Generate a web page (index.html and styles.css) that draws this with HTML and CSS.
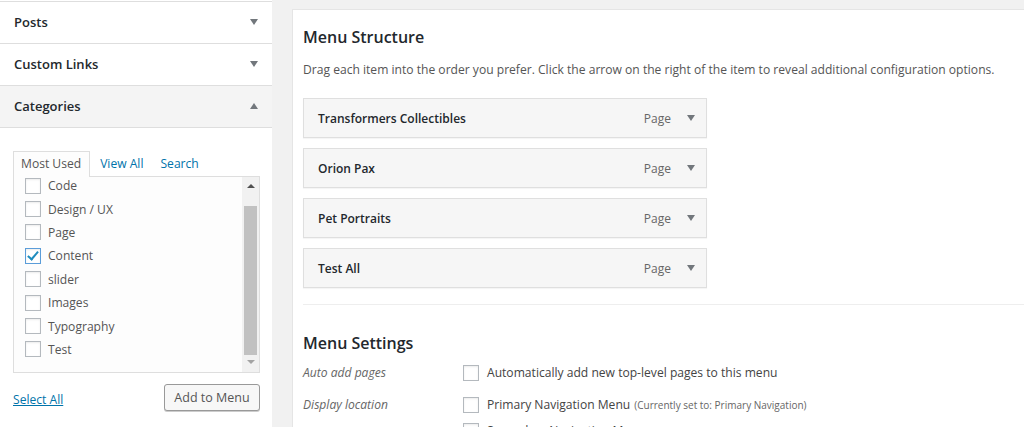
FILE: index.html
```html
<!DOCTYPE html>
<html>

<head>
    <title>Menus</title>
    <meta charset="UTF-8">
    <link rel="stylesheet" href="styles.css">
</head>

<body>
    <div class="page">
        <div class="sidebar">
            <div class="section">
                <div class="section-head">
                    <span>Posts</span>
                    <span class="caret down"></span>
                </div>
            </div>
            <div class="section">
                <div class="section-head">
                    <span>Custom Links</span>
                    <span class="caret down"></span>
                </div>
            </div>
            <div class="section open">
                <div class="section-head">
                    <span>Categories</span>
                    <span class="caret up"></span>
                </div>
                <div class="section-body">
                    <div class="tabs">
                        <span class="tab active">Most Used</span>
                        <a class="tab">View All</a>
                        <a class="tab">Search</a>
                    </div>
                    <div class="checklist">
                        <ul>
                            <li><span class="box"></span>Code</li>
                            <li><span class="box"></span>Design / UX</li>
                            <li><span class="box"></span>Page</li>
                            <li><span class="box checked"></span>Content</li>
                            <li><span class="box"></span>slider</li>
                            <li><span class="box"></span>Images</li>
                            <li><span class="box"></span>Typography</li>
                            <li><span class="box"></span>Test</li>
                        </ul>
                        <div class="scrollbar">
                            <span class="sb-arrow up"></span>
                            <span class="sb-thumb"></span>
                            <span class="sb-arrow down"></span>
                        </div>
                    </div>
                    <div class="actions">
                        <a class="select-all">Select All</a>
                        <button>Add to Menu</button>
                    </div>
                </div>
            </div>
        </div>

        <div class="main">
            <h2>Menu Structure</h2>
            <p class="desc">Drag each item into the order you prefer. Click the arrow on the right of the item to reveal additional configuration options.</p>

            <div class="menu-items">
                <div class="menu-item">
                    <span class="item-title">Transformers Collectibles</span>
                    <span class="item-type">Page</span>
                    <span class="caret down"></span>
                </div>
                <div class="menu-item">
                    <span class="item-title">Orion Pax</span>
                    <span class="item-type">Page</span>
                    <span class="caret down"></span>
                </div>
                <div class="menu-item">
                    <span class="item-title">Pet Portraits</span>
                    <span class="item-type">Page</span>
                    <span class="caret down"></span>
                </div>
                <div class="menu-item">
                    <span class="item-title">Test All</span>
                    <span class="item-type">Page</span>
                    <span class="caret down"></span>
                </div>
            </div>

            <div class="settings">
                <h3>Menu Settings</h3>
                <div class="setting-row">
                    <span class="setting-label">Auto add pages</span>
                    <div class="setting-options">
                        <label><span class="box"></span>Automatically add new top-level pages to this menu</label>
                    </div>
                </div>
                <div class="setting-row">
                    <span class="setting-label">Display location</span>
                    <div class="setting-options">
                        <label><span class="box"></span>Primary Navigation Menu <small>(Currently set to: Primary Navigation)</small></label>
                        <label><span class="box"></span>Secondary Navigation Menu</label>
                    </div>
                </div>
            </div>
        </div>
    </div>
</body>

</html>
```

FILE: styles.css
```css
body {
    margin: 0;
    background: #f1f1f1;
    font-family: "Open Sans", "Noto Sans", sans-serif;
    font-size: 12.1px;
    color: #444;
    overflow: hidden;
}
.page {
    display: flex;
    gap: 20px;
    height: 427px;
}

/* left accordion */
.sidebar {
    width: 272px;
    flex: none;
    background: white;
    padding-top: 1px;
}
.section {
    border-top: 1px solid #dedede;
}
.section-head {
    height: 41px;
    display: flex;
    align-items: center;
    justify-content: space-between;
    padding: 0 14px 1px;
    box-sizing: border-box;
    font-size: 13px;
    font-weight: 600;
    color: #23282d;
}
.section.open .section-head {
    background: #f4f4f4;
    border-bottom: 1px solid #dedede;
    height: 42px;
}
.caret {
    width: 0;
    height: 0;
    border-left: 4.5px solid transparent;
    border-right: 4.5px solid transparent;
}
.caret.down {
    border-top: 6px solid #72777c;
}
.caret.up {
    border-bottom: 6px solid #72777c;
}
.section-body {
    padding: 23px 12px 0 13px;
}
.tabs {
    display: flex;
    align-items: flex-end;
    height: 25px;
}
.tab {
    padding: 0 17px 0 0;
    color: #0073aa;
    line-height: 24px;
}
.tab.active {
    color: #555;
    border: 1px solid #dedede;
    border-bottom: none;
    background: #fdfdfd;
    padding: 0 8px 1px 7px;
    margin-right: 10px;
    position: relative;
    top: 1px;
}
.checklist {
    display: flex;
    height: 195px;
    border: 1px solid #dedede;
    background: #fdfdfd;
}
.checklist ul {
    list-style: none;
    margin: 0;
    padding: 0 0 0 11px;
    flex: 1;
}
.checklist li {
    display: flex;
    align-items: center;
    height: 23.4px;
    color: #555;
}
.checklist li:first-child {
    margin-top: -3px;
}
.box {
    width: 14px;
    height: 14px;
    border: 1px solid #b4b9be;
    background: white;
    box-shadow: inset 0 1px 2px rgba(0,0,0,0.08);
    margin-right: 7px;
    flex: none;
    position: relative;
}
.box.checked {
    border-color: #5b9dd9;
}
.box.checked::after {
    content: "";
    position: absolute;
    left: 4px;
    top: 0px;
    width: 4px;
    height: 9px;
    border-right: 2px solid #1e8cbe;
    border-bottom: 2px solid #1e8cbe;
    transform: rotate(40deg);
}
.scrollbar {
    width: 17px;
    background: #f1f1f1;
    display: flex;
    flex-direction: column;
    align-items: center;
}
.sb-arrow {
    width: 0;
    height: 0;
    border-left: 4px solid transparent;
    border-right: 4px solid transparent;
}
.sb-arrow.up {
    border-bottom: 4px solid #505050;
    margin: 7px 0 18px;
}
.sb-arrow.down {
    border-top: 4px solid #a3a3a3;
    margin: 5px 0 0;
}
.sb-thumb {
    width: 13px;
    height: 149px;
    background: #c1c1c1;
}
.actions {
    display: flex;
    justify-content: space-between;
    align-items: center;
    margin-top: 11px;
}
.select-all {
    color: #0073aa;
    text-decoration: underline;
    margin-top: 3px;
}
button {
    font-family: inherit;
    font-size: 12.5px;
    color: #555;
    background: #f7f7f7;
    border: 1px solid #999;
    border-radius: 3px;
    height: 27px;
    width: 96px;
    padding: 0;
    box-shadow: 0 1px 0 #ccc;
}

/* main panel */
.main {
    flex: 1;
    margin-top: 9px;
    background: white;
    border-top: 1px solid #e5e5e5;
    border-left: 1px solid #e5e5e5;
    padding: 0 0 0 10px;
}
h2 {
    font-size: 16px;
    font-weight: 600;
    color: #23282d;
    margin: 16px 0 0;
    line-height: 22px;
}
.desc {
    margin: 13px 0 0;
    line-height: 18px;
    color: #555;
}
.menu-items {
    margin-top: 19px;
    width: 404px;
    display: flex;
    flex-direction: column;
    gap: 10px;
}
.menu-item {
    height: 38px;
    border: 1px solid #dfdfdf;
    background: #f6f6f6;
    box-shadow: 0 1px 1px rgba(0,0,0,0.04);
    display: flex;
    align-items: center;
    padding: 0 11px 0 14px;
}
.item-title {
    flex: 1;
    font-size: 12px;
    font-weight: 600;
    color: #23282d;
}
.item-type {
    color: #666;
    font-size: 12px;
    margin-right: 16px;
}
.settings {
    margin-top: 16px;
    border-top: 1px solid #eee;
    width: 100%;
}
h3 {
    font-size: 16px;
    font-weight: 600;
    color: #23282d;
    margin: 27px 0 0;
    line-height: 22px;
}
.setting-row {
    display: flex;
    margin-top: 9px;
}
.setting-row + .setting-row {
    margin-top: 6px;
}
.setting-label {
    width: 160px;
    font-style: italic;
    color: #666;
    line-height: 20px;
}
.setting-options label {
    display: flex;
    align-items: center;
    line-height: 20px;
    margin-bottom: 6px;
}
.setting-options .box {
    margin-right: 8px;
}
small {
    font-size: 10px;
    color: #666;
    margin-left: 4px;
}
```
